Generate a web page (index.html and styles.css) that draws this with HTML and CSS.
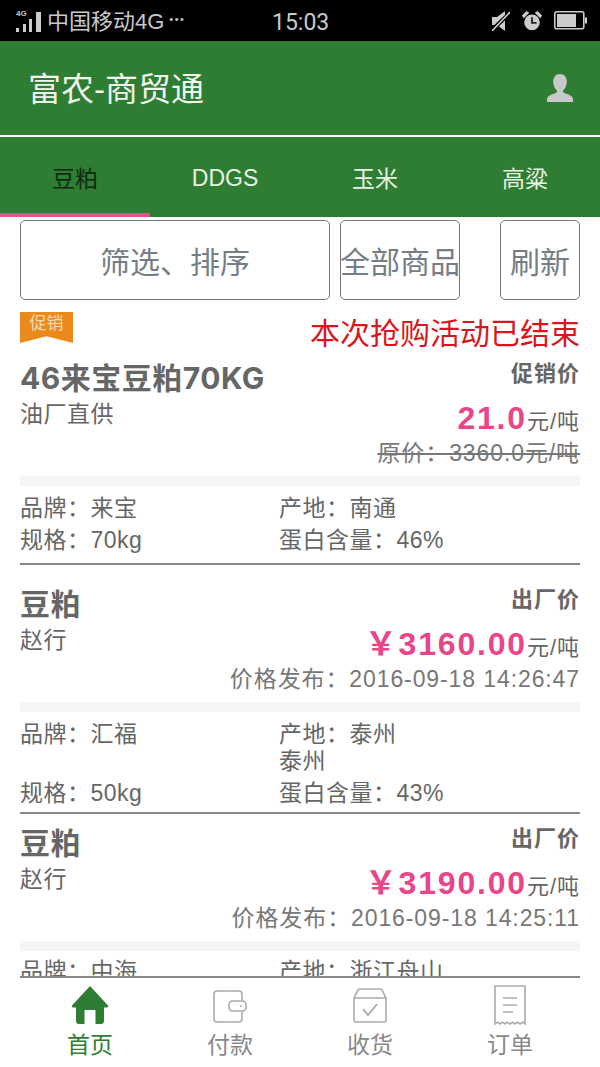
FILE: index.html
```html
<!DOCTYPE html>
<html lang="zh-CN">
<head>
    <meta charset="UTF-8">
    <meta name="viewport" content="width=device-width, initial-scale=1.0">
    <title>富农-商贸通</title>
    <link rel="stylesheet" href="styles.css">
</head>
<body>
<div class="page">
    <div class="status-bar">
        <div class="status-left">
            <svg class="signal" width="26" height="24" viewBox="0 0 26 24">
                <text x="0" y="7" class="signal-label">4G</text>
                <rect x="0" y="19" width="3" height="4" fill="#ccc"/>
                <rect x="7" y="15" width="3" height="8" fill="#ccc"/>
                <rect x="13" y="10" width="3" height="13" fill="#ccc"/>
                <rect x="20" y="3" width="5" height="20" fill="#ccc"/>
            </svg>
            <span class="carrier">中国移动4G</span>
            <span class="dots">•••</span>
        </div>
        <div class="status-time">15:03</div>
        <div class="status-right">
            <svg width="19" height="20" viewBox="0 0 19 20">
                <path d="M1 6h5l8-6v20l-8-6H1z" fill="#ccc"/>
                <path d="M0 20L19 2" stroke="#000" stroke-width="4"/>
                <path d="M1 20L19 1" stroke="#ccc" stroke-width="1.6"/>
            </svg>
            <svg width="22" height="22" viewBox="0 0 24 24">
                <circle cx="12" cy="13.500" r="8.500" fill="#ccc"/>
                <path d="M12 8v6h5" fill="none" stroke="#222" stroke-width="2"/>
                <path d="M1 6l5-5 3 2-6 6zM23 6l-5-5-3 2 6 6z" fill="#ccc"/>
            </svg>
            <svg width="33" height="19" viewBox="0 0 33 19">
                <rect x="0.800" y="0.800" width="29" height="17" rx="2" fill="none" stroke="#ccc" stroke-width="1.600"/>
                <rect x="3" y="3" width="19" height="13" fill="#ccc"/>
                <rect x="31" y="6.500" width="2" height="6" fill="#ccc"/>
            </svg>
        </div>
    </div>

    <div class="app-header">
        <div class="app-title">富农-商贸通</div>
        <svg class="user-icon" width="26" height="28" viewBox="0 0 26 28">
            <path d="M13 0c4.500 0 6.800 3.400 6.800 7.800 0 3.600-1.500 6.700-3.600 8.400v2.400c3.400 1.500 9.800 3 9.800 6.600V28H0v-2.800c0-3.600 6.400-5.100 9.800-6.600v-2.400C7.700 14.500 6.200 11.400 6.200 7.800 6.200 3.400 8.500 0 13 0z" fill="#c9c9c9"/>
        </svg>
    </div>

    <div class="tabs">
        <div class="tab active">豆粕</div>
        <div class="tab tab-latin">DDGS</div>
        <div class="tab">玉米</div>
        <div class="tab">高粱</div>
    </div>

    <div class="content">
        <div class="toolbar">
            <div class="btn btn-filter">筛选、排序</div>
            <div class="btn btn-all">全部商品</div>
            <div class="btn btn-refresh">刷新</div>
        </div>

        <div class="promo-row">
            <div class="promo-badge">促销</div>
            <div class="promo-over">本次抢购活动已结束</div>
        </div>

        <div class="goods goods-promo">
            <div class="goods-top">
                <div class="goods-left">
                    <div class="goods-name">46来宝豆粕70KG</div>
                    <div class="goods-seller">油厂直供</div>
                </div>
                <div class="goods-right">
                    <div class="price-type">促销价</div>
                    <div class="price-line"><span class="price">21.0</span>元/吨</div>
                    <div class="price-note"><s>原价：3360.0元/吨</s></div>
                </div>
            </div>
            <div class="goods-bar"></div>
            <div class="attrs">
                <div>品牌：来宝</div><div>产地：南通</div>
                <div>规格：70kg</div><div>蛋白含量：46%</div>
            </div>
        </div>

        <div class="goods goods-gap">
            <div class="goods-top">
                <div class="goods-left">
                    <div class="goods-name">豆粕</div>
                    <div class="goods-seller">赵行</div>
                </div>
                <div class="goods-right">
                    <div class="price-type">出厂价</div>
                    <div class="price-line"><span class="price">￥3160.00</span>元/吨</div>
                    <div class="price-note">价格发布：2016-09-18 14:26:47</div>
                </div>
            </div>
            <div class="goods-bar"></div>
            <div class="attrs">
                <div>品牌：汇福</div><div>产地：泰州<br>泰州</div>
                <div>规格：50kg</div><div>蛋白含量：43%</div>
            </div>
        </div>

        <div class="goods goods-last">
            <div class="goods-top">
                <div class="goods-left">
                    <div class="goods-name">豆粕</div>
                    <div class="goods-seller">赵行</div>
                </div>
                <div class="goods-right">
                    <div class="price-type">出厂价</div>
                    <div class="price-line"><span class="price">￥3190.00</span>元/吨</div>
                    <div class="price-note">价格发布：2016-09-18 14:25:11</div>
                </div>
            </div>
            <div class="goods-bar"></div>
            <div class="attrs">
                <div>品牌：中海</div><div>产地：浙江舟山</div>
            </div>
        </div>
    </div>

    <div class="bottom-nav">
        <div class="nav-item active">
            <svg width="40" height="42" viewBox="0 0 40 42">
                <path d="M20 2L38 21.500c.6 1-.1 1.900-1 1.900h-3V37c0 1.700-1 3-3 3h-5.500V26h-11v14H9c-2 0-3-1.300-3-3V23.400H3c-.9 0-1.600-.9-1-1.900z" fill="#2e7d32"/>
            </svg>
            <span>首页</span>
        </div>
        <div class="nav-item">
            <svg width="40" height="42" viewBox="0 0 40 42" fill="none" stroke="#aaa" stroke-width="1.600">
                <path d="M32 16V10a3 3 0 0 0-3-3H7a3 3 0 0 0-3 3v25a3 3 0 0 0 3 3h22a3 3 0 0 0 3-3v-7"/>
                <rect x="19" y="17" width="17" height="10" rx="3.500"/>
                <circle cx="31" cy="22" r="1" fill="#aaa" stroke="none"/>
            </svg>
            <span>付款</span>
        </div>
        <div class="nav-item">
            <svg width="40" height="42" viewBox="0 0 40 42" fill="none" stroke="#aaa" stroke-width="1.600">
                <path d="M4 14L8 6a2 2 0 0 1 2-1h20a2 2 0 0 1 2 1l4 8M4 14h32v22a2 2 0 0 1-2 2H6a2 2 0 0 1-2-2z"/>
                <path d="M13 25l5 6 9-11" stroke-width="1.800"/>
            </svg>
            <span>收货</span>
        </div>
        <div class="nav-item">
            <svg width="40" height="42" viewBox="0 0 40 42" fill="none" stroke="#aaa" stroke-width="1.600">
                <path d="M5 40V2h30v38l-2.500-1.800-2.500 1.800-2.500-1.800-2.500 1.800-2.500-1.800-2.500 1.800-2.500-1.800-2.500 1.800-2.500-1.800-2.500 1.800-2.500-1.800z"/>
                <path d="M13 14h14M13 21h14M13 28h10"/>
            </svg>
            <span>订单</span>
        </div>
    </div>
</div>
</body>
</html>
```

FILE: styles.css
```css
* {
    box-sizing: border-box;
}
html, body {
    margin: 0;
    padding: 0;
}
body {
    font-family: "Liberation Sans", "Noto Sans CJK SC", sans-serif;
    background-color: #fff;
    color: #666;
}
.page {
    display: flex;
    flex-direction: column;
    width: 600px;
    height: 1067px;
    overflow: hidden;
}

/* status bar */
.status-bar {
    display: flex;
    align-items: center;
    height: 41px;
    flex: none;
    padding: 0 13px 0 16px;
    background-color: #000;
    color: #c8c8c8;
    font-size: 22px;
}
.status-left {
    display: flex;
    align-items: center;
    width: 256px;
}
.signal {
    margin-right: 5px;
}
.signal-label {
    font-size: 8px;
    font-weight: bold;
    fill: #ccc;
}
.carrier {
    margin-bottom: 4px;
}
.dots {
    margin-left: 5px;
    margin-bottom: 4px;
    font-size: 11px;
    letter-spacing: 1.5px;
}
.status-time {
    padding-top: 4px;
    font-family: "Roboto", sans-serif;
    font-size: 23px;
}
.status-right {
    display: flex;
    align-items: center;
    gap: 11px;
    margin-left: auto;
}

/* header */
.app-header {
    display: flex;
    align-items: center;
    justify-content: space-between;
    flex: none;
    height: 96px;
    padding: 0 27px 0 28px;
    background-color: #2e7d32;
    border-bottom: 2px solid #fff;
}
.app-title {
    padding-bottom: 3px;
    color: #f0f5ee;
    font-size: 33px;
}
.tabs {
    display: flex;
    flex: none;
    height: 80px;
    background-color: #2e7d32;
}
.tab {
    display: flex;
    align-items: center;
    justify-content: center;
    flex: 1;
    padding-top: 4px;
    color: #e8f3e4;
    font-size: 23px;
    border-bottom: 4px solid transparent;
}
.tab-latin {
    padding-top: 7px;
}
.tab.active {
    color: #0d2a10;
    border-bottom-color: #ee4f8c;
}

/* list */
.content {
    flex: 1;
    min-height: 0;
    overflow: hidden;
    padding: 3px 20px 0;
}
.toolbar {
    display: flex;
    height: 80px;
}
.btn {
    display: flex;
    align-items: center;
    justify-content: center;
    height: 80px;
    border: 1px solid #777;
    border-radius: 5px;
    color: #747e84;
    font-size: 30px;
    white-space: nowrap;
}
.btn-filter {
    width: 310px;
}
.btn-all {
    width: 120px;
    margin-left: 10px;
}
.btn-refresh {
    width: 80px;
    margin-left: 40px;
}
.promo-row {
    display: flex;
    justify-content: space-between;
    height: 37px;
    margin-top: 12px;
}
.promo-badge {
    width: 53px;
    height: 31px;
    padding-top: 1px;
    background-color: #ea8a1d;
    clip-path: polygon(0 0, 100% 0, 100% 100%, 50% 78%, 0 100%);
    color: #f8d9b0;
    font-size: 17px;
    line-height: 22px;
    text-align: center;
}
.promo-over {
    margin-top: 5px;
    color: #d8161c;
    font-size: 30px;
    line-height: 34px;
    white-space: nowrap;
}
.goods {
    border-bottom: 2px solid #888;
}
.goods-gap {
    padding-top: 10px;
}
.goods-top {
    display: flex;
    justify-content: space-between;
    height: 127px;
}
.goods-left {
    padding-top: 9px;
}
.goods-name {
    color: #666;
    font-family: "Inter", "Noto Sans CJK SC", sans-serif;
    font-size: 30px;
    font-weight: bold;
    letter-spacing: 0.5px;
    line-height: 40px;
}
.goods-seller {
    font-size: 23px;
    letter-spacing: 0.5px;
    line-height: 32px;
}
.goods-right {
    padding-top: 10px;
    font-size: 22px;
    letter-spacing: 1px;
    line-height: 30px;
    text-align: right;
}
.price-type {
    font-weight: bold;
}
.price-line {
    height: 44px;
    margin-top: 7px;
    line-height: 44px;
}
.price {
    color: #e8458a;
    font-size: 32px;
    font-weight: bold;
    letter-spacing: 1.8px;
}
.price-note {
    color: #777;
    font-size: 23px;
    letter-spacing: 0.9px;
    line-height: 26px;
    white-space: nowrap;
}
.goods-bar {
    height: 10px;
    background-color: #f5f5f5;
}
.attrs {
    display: grid;
    grid-template-columns: 259px 1fr;
    row-gap: 5px;
    padding: 9px 0 5px;
    font-size: 23px;
    letter-spacing: 0.5px;
    line-height: 27px;
}
.goods-promo .attrs {
    padding-bottom: 9px;
}
.goods-last {
    border-bottom: none;
}
.goods-last .attrs {
    padding-top: 7px;
}

/* bottom nav */
.bottom-nav {
    display: flex;
    flex: none;
    height: 91px;
    margin: 0 20px;
    padding-top: 6px;
    background-color: #fff;
    border-top: 2px solid #888;
}
.nav-item {
    display: flex;
    flex-direction: column;
    align-items: center;
    flex: 1;
    color: #888;
    font-size: 23px;
    line-height: 30px;
}
.nav-item span {
    margin-top: 4px;
}
.nav-item.active {
    color: #2e7d32;
}
```
